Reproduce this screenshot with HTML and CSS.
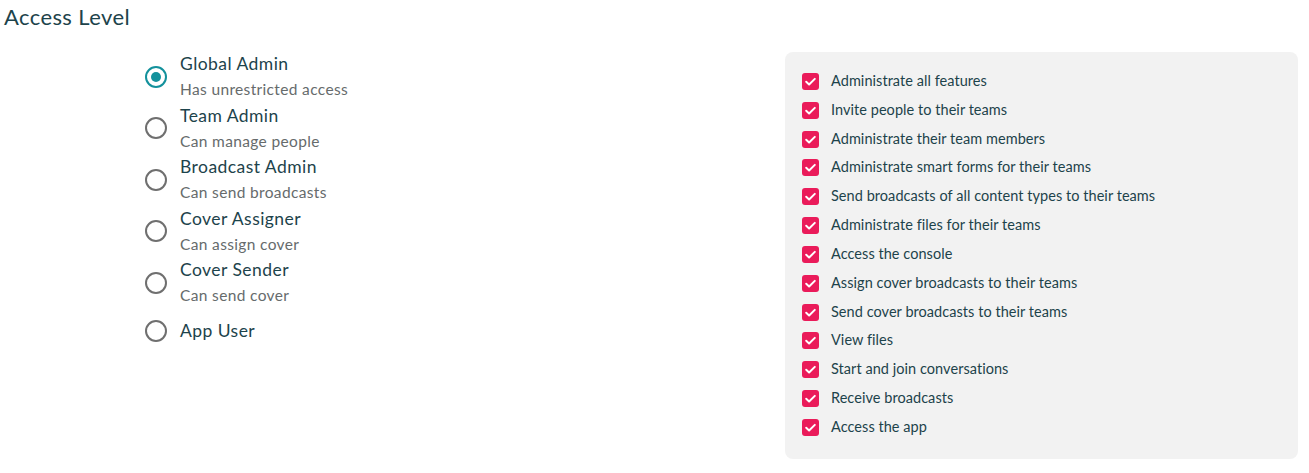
FILE: index.html
```html
<!DOCTYPE html>
<html lang="en">
<head>
<meta charset="utf-8">
<title>Access Level</title>
<link rel="stylesheet" href="styles.css">
</head>
<body>
<h2 class="heading">Access Level</h2>
<div class="layout">
  <div class="roles">
    <div class="role">
      <span class="radio radio--on"></span>
      <div class="role-text">
        <div class="role-title">Global Admin</div>
        <div class="role-desc">Has unrestricted access</div>
      </div>
    </div>
    <div class="role">
      <span class="radio"></span>
      <div class="role-text">
        <div class="role-title">Team Admin</div>
        <div class="role-desc">Can manage people</div>
      </div>
    </div>
    <div class="role">
      <span class="radio"></span>
      <div class="role-text">
        <div class="role-title">Broadcast Admin</div>
        <div class="role-desc">Can send broadcasts</div>
      </div>
    </div>
    <div class="role">
      <span class="radio"></span>
      <div class="role-text">
        <div class="role-title">Cover Assigner</div>
        <div class="role-desc">Can assign cover</div>
      </div>
    </div>
    <div class="role">
      <span class="radio"></span>
      <div class="role-text">
        <div class="role-title">Cover Sender</div>
        <div class="role-desc">Can send cover</div>
      </div>
    </div>
    <div class="role role--single">
      <span class="radio"></span>
      <div class="role-text">
        <div class="role-title">App User</div>
      </div>
    </div>
  </div>
  <div class="perms">
    <div class="perm"><span class="check"><svg viewBox="0 0 17 17"><path d="M4.2 8.8l2.9 2.7 5.7-5.6"/></svg></span>Administrate all features</div>
    <div class="perm"><span class="check"><svg viewBox="0 0 17 17"><path d="M4.2 8.8l2.9 2.7 5.7-5.6"/></svg></span>Invite people to their teams</div>
    <div class="perm"><span class="check"><svg viewBox="0 0 17 17"><path d="M4.2 8.8l2.9 2.7 5.7-5.6"/></svg></span>Administrate their team members</div>
    <div class="perm"><span class="check"><svg viewBox="0 0 17 17"><path d="M4.2 8.8l2.9 2.7 5.7-5.6"/></svg></span>Administrate smart forms for their teams</div>
    <div class="perm"><span class="check"><svg viewBox="0 0 17 17"><path d="M4.2 8.8l2.9 2.7 5.7-5.6"/></svg></span>Send broadcasts of all content types to their teams</div>
    <div class="perm"><span class="check"><svg viewBox="0 0 17 17"><path d="M4.2 8.8l2.9 2.7 5.7-5.6"/></svg></span>Administrate files for their teams</div>
    <div class="perm"><span class="check"><svg viewBox="0 0 17 17"><path d="M4.2 8.8l2.9 2.7 5.7-5.6"/></svg></span>Access the console</div>
    <div class="perm"><span class="check"><svg viewBox="0 0 17 17"><path d="M4.2 8.8l2.9 2.7 5.7-5.6"/></svg></span>Assign cover broadcasts to their teams</div>
    <div class="perm"><span class="check"><svg viewBox="0 0 17 17"><path d="M4.2 8.8l2.9 2.7 5.7-5.6"/></svg></span>Send cover broadcasts to their teams</div>
    <div class="perm"><span class="check"><svg viewBox="0 0 17 17"><path d="M4.2 8.8l2.9 2.7 5.7-5.6"/></svg></span>View files</div>
    <div class="perm"><span class="check"><svg viewBox="0 0 17 17"><path d="M4.2 8.8l2.9 2.7 5.7-5.6"/></svg></span>Start and join conversations</div>
    <div class="perm"><span class="check"><svg viewBox="0 0 17 17"><path d="M4.2 8.8l2.9 2.7 5.7-5.6"/></svg></span>Receive broadcasts</div>
    <div class="perm"><span class="check"><svg viewBox="0 0 17 17"><path d="M4.2 8.8l2.9 2.7 5.7-5.6"/></svg></span>Access the app</div>
  </div>
</div>
</body>
</html>
```
FILE: styles.css
```css
html, body {
  margin: 0;
  padding: 0;
  background: #ffffff;
}
body {
  font-family: "Lato", "Open Sans", sans-serif;
  color: #1d434b;
}
.heading {
  margin: 0;
  padding: 4px 0 0 4px;
  height: 32px;
  font-size: 22px;
  line-height: 26px;
  font-weight: 400;
  letter-spacing: 0.4px;
  color: #1d434b;
}
.layout {
  display: flex;
  align-items: flex-start;
  padding-top: 16px;
}
.roles {
  flex: 1;
  padding-left: 145px;
  margin-top: -1px;
}
.role {
  display: flex;
  align-items: center;
  gap: 13px;
  height: 51.5px;
}
.role--single {
  height: 44px;
}
.radio {
  box-sizing: border-box;
  width: 22px;
  height: 22px;
  border-radius: 50%;
  border: 2px solid #6f6f6f;
  display: flex;
  align-items: center;
  justify-content: center;
  flex: none;
}
.radio--on {
  border-color: #13919c;
}
.radio--on::after {
  content: "";
  width: 10px;
  height: 10px;
  border-radius: 50%;
  background: #13919c;
}
.role-title {
  font-size: 17.5px;
  line-height: 26px;
  letter-spacing: 0.45px;
  color: #1d434b;
}
.role-desc {
  font-size: 15.5px;
  line-height: 25.5px;
  letter-spacing: 0.35px;
  color: #666b6c;
}
.perms {
  width: 513px;
  margin-right: 11px;
  box-sizing: border-box;
  background: #f2f2f2;
  border-radius: 8px;
  padding: 14px 17px 17px;
  height: 407px;
}
.perm {
  display: flex;
  align-items: center;
  gap: 12px;
  height: 28.83px;
  font-size: 14.5px;
  letter-spacing: 0.05px;
  color: #1d434b;
}
.check {
  width: 17px;
  height: 17px;
  border-radius: 3px;
  background: #ea1b5a;
  flex: none;
  display: flex;
  margin-top: 2px;
}
.check svg {
  width: 17px;
  height: 17px;
  fill: none;
  stroke: #ffffff;
  stroke-width: 2;
  stroke-linecap: round;
  stroke-linejoin: round;
}
```
